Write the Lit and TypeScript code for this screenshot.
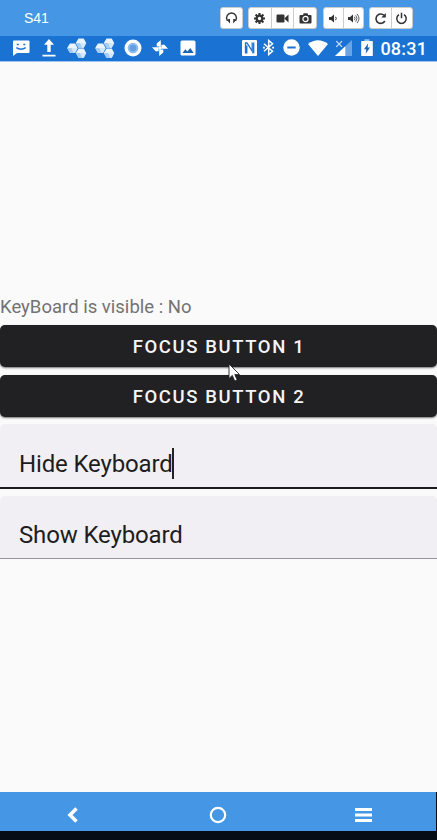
import { LitElement, html, css, svg, TemplateResult } from "lit";
import { customElement, property } from "lit/decorators.js";

const icon = (w: number, h: number, body: TemplateResult, cls = "") =>
  html`<svg class=${cls} width=${w} height=${h} viewBox="0 0 ${w} ${h}" fill="currentColor">${body}</svg>`;

const cube = (x: number, y: number) => svg`<g transform="translate(${x} ${y})">
  <path d="M-2.500-4.600H2.700L5.200 0 2.700 4.700H-2.500L-5.200 0Z" fill="#e9f4fe"/>
  <path d="M-5.200 0H-.8L1.200 4.700H-2.500Z" fill="#a4cbf3"/>
  <path d="M-.8 0 1.200 4.700H2.700L5.200 0Z" fill="#d3e8fc"/></g>`;
const cubes = () => svg`${cube(14, 5)}${cube(5.400, 10)}${cube(14, 15)}`;

const notifications = [
  icon(18, 18, svg`<path d="M1.500 1.500h15a1 1 0 0 1 1 1v10.500a1 1 0 0 1-1 1H5L1 17V2.500Z"/>
    <path d="M4.800 5.500h2M11.300 5.500h2M4.300 8.600q4.700 3.200 9.400 0" fill="none" stroke="#1a73d3" stroke-width="1.400"/>`),
  icon(14, 18, svg`<path d="M7 0 12 5.700H8.700V13H5.300V5.700H2ZM.5 15.700h13v1.700H.5Z"/>`),
  icon(20, 20, cubes()),
  icon(20, 20, cubes()),
  icon(18, 18, svg`<circle cx="9" cy="9" r="8.500"/><circle cx="9" cy="9" r="5.300" fill="#8cbcf0"/><circle cx="9" cy="9" r="3.300" fill="#659fe2"/>`),
  icon(18, 18, svg`${[0, 90, 180, 270].map((a) => svg`<path transform="rotate(${a} 9 9)" d="M9.800 9.500V1L5.700 4.600V7.600H8.500V9.500Z"/>`)}`),
  icon(16, 16, svg`<rect x=".5" y=".5" width="15" height="15" rx="1.500"/><path d="M2.500 13 5.300 9.300 7.400 11.500 10.300 8 13.700 13Z" fill="#1a63b5"/>`),
];

const system = [
  icon(15, 16, svg`<rect width="15" height="16" rx="1" fill="#fff"/><path d="M3.500 13.500V3H5L10.200 11V2.500M4.800 13.500V5.500M10.200 12.500H11.700V2.500" fill="none" stroke="#1a73d3" stroke-width="1.300"/>`, "nfc"),
  icon(11, 17, svg`<path d="M1 4.700 9.500 12.200 5.700 15.500V1.500L9.500 4.800 1 12.300" fill="none" stroke="#fff" stroke-width="1.500"/><path d="M0 7.700h1.800v1.700H0ZM9.200 7.700H11v1.700H9.200Z"/>`, "bt"),
  icon(17, 17, svg`<circle cx="8.500" cy="8.500" r="8.200"/><path d="M4.300 7.500h8.400v2H4.300Z" fill="#1a73d3"/>`, "dnd"),
  icon(20, 16, svg`<path d="M0 4Q10-3.500 20 4L10 16Z"/>`, "wifi"),
  icon(17, 16, svg`<path d="M17 0V16H0Z" fill="#69a5e5"/><path d="M10.300 6.300V16H0Z"/><path d="M1.300 1.200 7 6.900M7 1.200 1.300 6.900" stroke="#cfe3f8" stroke-width="1.200"/>`, "signal"),
  icon(12, 17, svg`<path d="M3.500 .3h5V2h-5Z" fill="#9cc4ee"/><path d="M.8 2H11.200q.6 0 .6.600V16.400q0 .6-.6.600H.8q-.6 0-.6-.6V2.600q0-.6.600-.6Z"/><path d="M7.200 4.200 3 10.300H5.300L4.700 14.800 9 8.600H6.600Z" fill="#1a63b5"/>`, "battery"),
];

const gear = svg`<circle cx="6.500" cy="6.500" r="2.800" fill="none" stroke="#333" stroke-width="2.200"/>
  <path d="M6.500 1v2M6.500 10v2M1 6.500h2M10 6.500h2M2.600 2.600 4 4M9 9l1.400 1.400M10.400 2.600 9 4M4 9l-1.400 1.400" stroke="#333" stroke-width="2.100"/>`;

const tools = [
  { name: "g1", items: [icon(13, 13, svg`<path d="M3.300 8.200H2.200A4.900 4.900 0 1 1 10.800 8.200H9.700" fill="none" stroke="#333" stroke-width="1.400"/><path d="M3.300 7H5v4.500L3 9.300ZM8.200 7h1.700l.2 2.300L8.200 11.500Z"/>`)] },
  { name: "g2", items: [
    icon(13, 13, gear),
    icon(13, 13, svg`<path d="M1.500 2.500h6q1 0 1 1v6q0 1-1 1h-6q-1 0-1-1v-6q0-1 1-1ZM8.800 6 12.500 2.600v7.800L8.800 7Z"/>`),
    icon(13, 13, svg`<path d="M1.500 3H4L4.700 1.200H8.500L9.200 3h2.300q1 0 1 1v6.500q0 1-1 1h-10q-1 0-1-1V4q0-1 1-1Z"/><circle cx="6.500" cy="7" r="2.600" fill="none" stroke="#fff" stroke-width="1.200"/>`)] },
  { name: "g3", items: [
    icon(13, 13, svg`<path d="M2 4.900H4L7 2.500V10.500L4 8.100H2Z"/><path d="M8.500 4.800q1.500 1.700 0 3.400" fill="none" stroke="#333"/>`),
    icon(13, 13, svg`<path d="M1 4.900H3L6 2.500V10.500L3 8.100H1Z"/><path d="M7.300 4.800q1.500 1.700 0 3.400M8.700 3.300q2.700 3.200 0 6.400M10 1.900q4 4.600 0 9.200" fill="none" stroke="#333" stroke-width=".8"/>`)] },
  { name: "g4", items: [
    icon(13, 13, svg`<path d="M10.800 9A4.700 4.700 0 1 1 10 3.300" fill="none" stroke="#333" stroke-width="1.600"/><path d="M11.800 1v4.500H7.300Z"/>`),
    icon(13, 13, svg`<path d="M4 2.700A4.700 4.700 0 1 0 9 2.700M6.500 .8V6.300" fill="none" stroke="#333" stroke-width="1.500"/>`)] },
];

@customElement("text-field")
class TextField extends LitElement {
  @property() value = "";
  @property({ type: Boolean, reflect: true }) active = false;
  static styles = css`
    :host { display: flex; box-sizing: border-box; height: 63px; padding: 15px 0 0 19px; align-items: center; background: #f1eff3; border-bottom: 1px solid #96959a; border-radius: 5px 5px 0 0; color: #1d1d1f; font: 24px/30px Roboto, sans-serif; }
    :host([active]) { height: 65px; border-bottom: 2px solid #1b1b1d; }
    .value { white-space: nowrap; letter-spacing: -0.140px; padding-top: 1px; }
    .caret { width: 2px; height: 31px; background: #222; margin-left: -1px; }
  `;
  render() {
    return html`<span class="value">${this.value}</span>${this.active ? html`<span class="caret"></span>` : ""}`;
  }
}

@customElement("app-root")
class AppRoot extends LitElement {
  static styles = css`
    :host { display: flex; flex-direction: column; width: 437px; height: 840px; background: #070d15; font-family: Roboto, sans-serif; overflow: hidden; position: relative; }
    svg { display: block; flex: none; }
    .title { height: 36px; flex: none; background: #4596e5; display: flex; align-items: center; color: #fff; }
    .name { box-sizing: border-box; width: 220px; padding-left: 24px; font: 14px/16px "Liberation Sans", Arial, sans-serif; }
    .tools { display: flex; gap: 6px; color: #333; }
    .group { display: flex; box-sizing: border-box; height: 22px; background: #fff; border: 1px solid #ccc; border-radius: 3px; }
    .tool { flex: 1; display: flex; align-items: center; justify-content: center; }
    .tool + .tool { border-left: 1px solid #ccc; }
    .g1 { width: 23px; }
    .g2 { width: 69px; margin-left: -1px; }
    .g3 { width: 41px; }
    .g4 { width: 44px; margin-left: -1px; }
    .status { height: 26px; flex: none; box-sizing: border-box; padding: 0 0 2px 7px; border-bottom: 1px solid #9dc5ef; background: #1a73d3; color: #fff; display: flex; align-items: center; }
    .note { width: 27.900px; display: flex; justify-content: center; flex: none; }
    .nfc { margin-left: 39.700px; }
    .bt { margin-left: 6px; }
    .dnd { margin-left: 9px; }
    .wifi { margin-left: 8px; }
    .signal { margin-left: 7px; }
    .battery { margin-left: 9px; }
    .time { margin-left: 7.500px; font: 500 18px/24px Roboto, sans-serif; white-space: nowrap; padding-top: 2px; letter-spacing: .2px; }
    .screen { flex: 1; background: #fafafa; display: flex; flex-direction: column; }
    .label { margin-top: 233px; height: 30px; font-size: 18.500px; line-height: 24px; color: #727272; white-space: nowrap; letter-spacing: .010px; }
    .button { display: flex; align-items: center; justify-content: center; height: 42px; margin-bottom: 8px; border-radius: 5px; background: #212123; color: #f5f5f5; font-size: 18.500px; font-weight: 500; letter-spacing: 1.600px; box-shadow: 0 1px 2px #0008; padding: 2px 0 0 1px; box-sizing: border-box; }
    text-field { margin-top: -1px; }
    text-field + text-field { margin-top: 7px; }
    .nav { height: 39px; flex: none; width: 436px; margin-bottom: 9px; background: #4596e5; color: #fff; display: grid; grid-template-columns: repeat(3, 145.400px); align-items: center; justify-items: center; padding-top: 6px; box-sizing: border-box; }
    .pointer { position: absolute; left: 228px; top: 363px; }
  `;
  render() {
    return html`
      <header class="title">
        <span class="name">S41</span>
        <div class="tools">
          ${tools.map((g) => html`<div class="group ${g.name}">${g.items.map((i) => html`<span class="tool">${i}</span>`)}</div>`)}
        </div>
      </header>
      <div class="status">
        ${notifications.map((n) => html`<span class="note">${n}</span>`)}
        ${system}
        <span class="time">08:31</span>
      </div>
      <main class="screen">
        <div class="label">KeyBoard is visible : No</div>
        <div class="button">FOCUS BUTTON 1</div>
        <div class="button">FOCUS BUTTON 2</div>
        <text-field value="Hide Keyboard" active></text-field>
        <text-field value="Show Keyboard"></text-field>
      </main>
      <nav class="nav">
        ${icon(14, 18, svg`<path d="M10.500 2.500 4 9 10.500 15.500" fill="none" stroke="#fff" stroke-width="3.600"/>`)}
        ${icon(18, 18, svg`<circle cx="9" cy="9" r="7.200" fill="none" stroke="#fff" stroke-width="2.200"/>`)}
        ${icon(17, 14, svg`<path d="M0 0h17v3H0ZM0 5.500h17v3H0ZM0 11h17v3H0Z"/>`)}
      </nav>
      <svg class="pointer" width="13" height="20" viewBox="0 0 13 20"><path d="M1 1V15.500L4.300 12.400 6.700 18 9.200 17 6.800 11.500H11.500Z" fill="#fff" stroke="#222" stroke-width=".9"/></svg>
    `;
  }
}
